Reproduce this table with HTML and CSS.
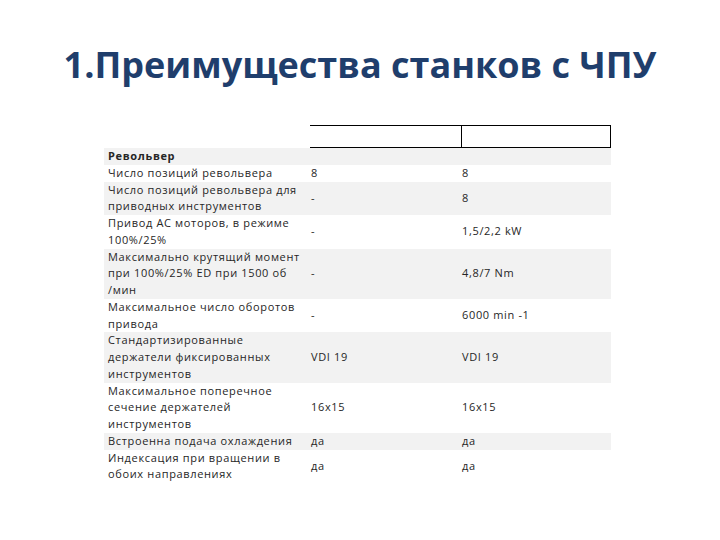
FILE: index.html
```html
<!DOCTYPE html>
<html lang="ru">
<head>
<meta charset="utf-8">
<link rel="stylesheet" href="styles.css">
</head>
<body>
<div class="slide">
  <h1 class="title">1.Преимущества станков с ЧПУ</h1>
  <div class="table">
    <div class="row head">
      <div class="cell c1"></div>
      <div class="cell c2"></div>
      <div class="cell c3"></div>
    </div>
    <div class="row alt">
      <div class="cell c1 bold">Револьвер</div>
      <div class="cell c2"></div>
      <div class="cell c3"></div>
    </div>
    <div class="row">
      <div class="cell c1">Число позиций револьвера</div>
      <div class="cell c2">8</div>
      <div class="cell c3">8</div>
    </div>
    <div class="row alt">
      <div class="cell c1">Число позиций револьвера для<br>приводных инструментов</div>
      <div class="cell c2">-</div>
      <div class="cell c3">8</div>
    </div>
    <div class="row">
      <div class="cell c1">Привод AC моторов, в режиме<br>100%/25%</div>
      <div class="cell c2">-</div>
      <div class="cell c3">1,5/2,2 kW</div>
    </div>
    <div class="row alt">
      <div class="cell c1">Максимально крутящий момент<br>при 100%/25% ED при 1500 об<br>/мин</div>
      <div class="cell c2">-</div>
      <div class="cell c3">4,8/7 Nm</div>
    </div>
    <div class="row">
      <div class="cell c1">Максимальное число оборотов<br>привода</div>
      <div class="cell c2">-</div>
      <div class="cell c3">6000 min -1</div>
    </div>
    <div class="row alt">
      <div class="cell c1">Стандартизированные<br>держатели фиксированных<br>инструментов</div>
      <div class="cell c2">VDI 19</div>
      <div class="cell c3">VDI 19</div>
    </div>
    <div class="row">
      <div class="cell c1">Максимальное поперечное<br>сечение держателей<br>инструментов</div>
      <div class="cell c2">16x15</div>
      <div class="cell c3">16x15</div>
    </div>
    <div class="row alt">
      <div class="cell c1">Встроенна подача охлаждения</div>
      <div class="cell c2">да</div>
      <div class="cell c3">да</div>
    </div>
    <div class="row">
      <div class="cell c1">Индексация при вращении в<br>обоих направлениях</div>
      <div class="cell c2">да</div>
      <div class="cell c3">да</div>
    </div>
  </div>
</div>
</body>
</html>
```

FILE: styles.css
```css
html, body {
  margin: 0;
  padding: 0;
  background: #ffffff;
}

.slide {
  width: 720px;
  height: 540px;
  overflow: hidden;
}

.title {
  margin: 40px 0 0 0;
  text-align: center;
  font-family: "Open Sans", "Liberation Sans", sans-serif;
  font-weight: 700;
  font-size: 36px;
  line-height: 49px;
  color: #1f3e6c;
}

.table {
  margin: 36px 0 0 104px;
  width: 507px;
  font-family: "Open Sans", "Liberation Sans", sans-serif;
  font-size: 11px;
  letter-spacing: 0.65px;
  line-height: 16.75px;
  color: #262626;
}

.row {
  display: grid;
  grid-template-columns: 206px 151px 150px;
}

.row.alt {
  background: #f2f2f2;
}

.cell {
  display: flex;
  align-items: center;
  white-space: nowrap;
}

.c1 {
  padding-left: 4px;
  padding-right: 4px;
}

.c2, .c3 {
  padding-left: 1px;
}

.bold {
  font-weight: 700;
}

.head {
  height: 23px;
}

.head .c2,
.head .c3 {
  border-top: 1.5px solid #000;
  border-bottom: 1.5px solid #000;
}

.head .c3 {
  border-left: 1.5px solid #000;
  border-right: 1.5px solid #000;
}
```
